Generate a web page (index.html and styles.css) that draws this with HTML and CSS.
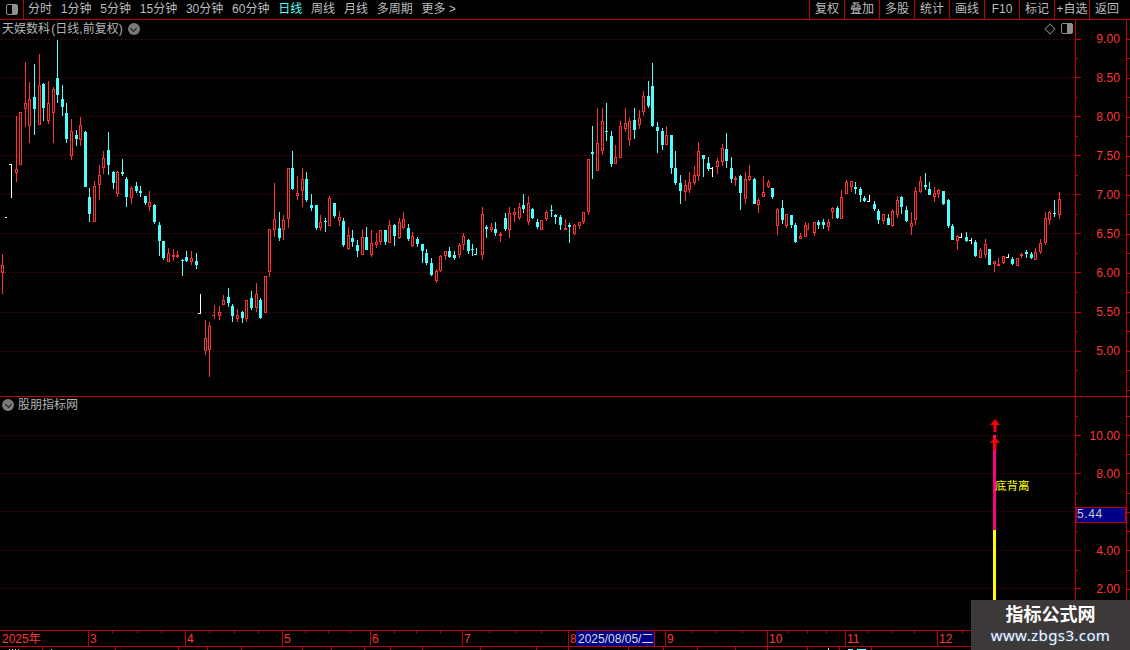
FILE: index.html
```html
<!DOCTYPE html>
<html lang="zh-CN">
<head>
<meta charset="utf-8">
<title>天娱数科 日线</title>
<link rel="stylesheet" href="styles.css">
</head>
<body>
<div class="app">
  <header class="toolbar">
    <div class="layout-cell"><span class="split-icon"><i></i></span></div>
    <nav class="periods">
      <span>分时</span><span>1分钟</span><span>5分钟</span><span>15分钟</span><span>30分钟</span><span>60分钟</span>
      <span class="active">日线</span><span>周线</span><span>月线</span><span>多周期</span><span>更多 &gt;</span>
    </nav>
    <div class="actions">
      <span>复权</span><span>叠加</span><span>多股</span><span>统计</span><span>画线</span><span>F10</span><span>标记</span><span>+自选</span><span>返回</span>
    </div>
  </header>

  <section class="panel panel-main">
    <svg class="chart" viewBox="0 20 1130 376" shape-rendering="crispEdges">
      <path id="main-grid" class="grid"/>
      <g id="candles"></g>
      <path id="main-ticks" class="axis-line"/>
      <g class="axis-label">
        <text x="1120" y="43">9.00</text><text x="1120" y="82">8.50</text><text x="1120" y="121">8.00</text>
        <text x="1120" y="160">7.50</text><text x="1120" y="199">7.00</text><text x="1120" y="238">6.50</text>
        <text x="1120" y="277">6.00</text><text x="1120" y="316">5.50</text><text x="1120" y="355">5.00</text>
      </g>
    </svg>
    <div class="stock-title">天娱数科 (日线,前复权)<span class="round-icon"></span></div>
    <div class="chart-tools"><span class="diamond"></span><span class="split-icon"><i></i></span></div>
  </section>

  <section class="panel panel-sub">
    <svg class="chart" viewBox="0 397 1130 233" shape-rendering="crispEdges">
      <path id="sub-grid" class="grid"/>
      <rect class="bar-pink" x="993" y="435" width="3" height="95"/>
      <rect class="bar-yellow" x="993" y="530" width="3" height="70"/>
      <path class="arrow" shape-rendering="auto" d="M995 419l5 6h-3.500v7h-3v-7h-3.500zM995 437l5 6h-3.500v7h-3v-7h-3.500z"/>
      <text class="signal" x="995" y="490">底背离</text>
      <path id="sub-ticks" class="axis-line"/>
      <g class="axis-label">
        <text x="1120" y="440">10.00</text><text x="1120" y="478">8.00</text>
        <text x="1120" y="555">4.00</text><text x="1120" y="593">2.00</text>
      </g>
      <rect class="value-box" x="1076.500" y="507.500" width="49" height="15"/>
      <text class="value-text" x="1077" y="518">5.44</text>
    </svg>
    <div class="indicator-title"><span class="round-icon"></span>股朋指标网</div>
  </section>

  <section class="panel panel-date">
    <svg class="chart" viewBox="0 631 1130 15" shape-rendering="crispEdges">
      <path class="axis-line" d="M88.500 631V646M185.500 631V646M282.500 631V646M370.500 631V646M462.500 631V646M568.500 631V646M665.500 631V646M767.500 631V646M845.500 631V646M937.500 631V646M112.500 631v2M137.500 631v2M161.500 631v2M209.500 631v2M234.500 631v2M258.500 631v2M305.500 631v2M328.500 631v2M350.500 631v2M394.500 631v2M416.500 631v2M440.500 631v2M489.500 631v2M515.500 631v2M541.500 631v2M691.500 631v2M716.500 631v2M742.500 631v2M787.500 631v2M807.500 631v2M826.500 631v2M868.500 631v2M891.500 631v2M914.500 631v2M962.500 631v2"/>
      <g class="date-label">
        <text x="2" y="643">2025年</text><text x="90" y="643">3</text><text x="187" y="643">4</text>
        <text x="284" y="643">5</text><text x="372" y="643">6</text><text x="464" y="643">7</text>
        <text x="570" y="643">8</text><text x="667" y="643">9</text><text x="769" y="643">10</text>
        <text x="847" y="643">11</text><text x="939" y="643">12</text>
      </g>
      <rect class="cursor-box" x="576" y="631" width="78" height="15"/>
      <path class="axis-line" d="M654.500 631V646"/>
      <text class="cursor-text" x="578" y="643">2025/08/05/二</text>
    </svg>
  </section>

  <section class="panel-strip">
    <svg class="chart" viewBox="0 647 1130 3" shape-rendering="crispEdges">
      <path class="axis-line" d="M42.500 647v3M115.500 647v3M178.500 647v3M207.500 647v3M241.500 647v3M302.500 647v3M331.500 647v3M364.500 647v3M390.500 647v3M422.500 647v3M480.500 647v3M536.500 647v3M568.500 647v3M628.500 647v3M663.500 647v3M697.500 647v3M735.500 647v3M767.500 647v3M807.500 647v3M839.500 647v3M871.500 647v3"/>
      <path class="strip-white" d="M9 649h1v1h-1zM12 649h1v1h-1zM15 649h1v1h-1zM18 649h1v1h-1zM51 649h1v1h-1zM828 648h1v2h-1z"/>
      <path class="strip-cyan" d="M848 649h5v1h-5zM857 649h9v1h-9z"/>
    </svg>
  </section>

  <aside class="watermark">
    <strong>指标公式网</strong>
    <span>www.zbgs3.com</span>
  </aside>
</div>
<script src="chart.js"></script>
</body>
</html>
```
FILE: styles.css
```css
* { box-sizing: border-box; }
html, body { margin: 0; padding: 0; background: #000; }
.app {
  position: relative;
  width: 1130px;
  height: 650px;
  overflow: hidden;
  display: flex;
  flex-direction: column;
  background: #000;
  color: #bdbdbd;
  font: 12px/1 "Liberation Sans", "Noto Sans CJK SC", sans-serif;
}
.toolbar {
  flex: none;
  height: 20px;
  display: flex;
  align-items: stretch;
  border-bottom: 1px solid #c00000;
  line-height: 19px;
}
.layout-cell {
  width: 24px;
  border-right: 1px solid #c00000;
  display: flex;
  align-items: center;
  justify-content: center;
}
.split-icon {
  display: block;
  width: 12px;
  height: 11px;
  border: 1px solid #8f8f8f;
  border-radius: 2px;
  position: relative;
}
.split-icon i {
  position: absolute;
  top: 0;
  right: 0;
  bottom: 0;
  width: 5px;
  background: #8f8f8f;
}
.periods {
  display: flex;
  gap: 8.800px;
  padding-left: 4px;
}
.periods .active { color: #54ffff; }
.actions {
  margin-left: auto;
  margin-right: 6px;
  display: flex;
}
.actions span {
  width: 35px;
  text-align: center;
  border-left: 1px solid #c00000;
  white-space: nowrap;
}
.panel {
  flex: none;
  position: relative;
  border-bottom: 1px solid #c00000;
}
.panel-main { height: 377px; }
.panel-sub { height: 234px; }
.panel-date { border-top: 1px solid #c00000; margin-top: -1px; height: 17px; }
.panel-strip { flex: none; height: 3px; }
.chart { display: block; width: 1130px; height: 100%; }
.grid { fill: #8c0000; stroke: none; }
.axis-line { fill: none; stroke: #c00000; stroke-width: 1; }
.axis-label text {
  fill: #ff3636;
  font-size: 12px;
  text-anchor: end;
  letter-spacing: .1px;
}
.date-label text { fill: #ff3636; font-size: 12px; }
.stock-title {
  position: absolute;
  left: 2px;
  top: 1px;
  height: 16px;
  line-height: 16px;
  display: flex;
  align-items: center;
  color: #b4b4b4;
  word-spacing: -2px;
}
.round-icon {
  display: block;
  width: 12px;
  height: 12px;
  border-radius: 50%;
  background: #7a7a7a;
  position: relative;
  flex: none;
}
.round-icon::after {
  content: "";
  position: absolute;
  left: 3.500px;
  top: 2.500px;
  width: 4px;
  height: 4px;
  border-right: 1.500px solid #1c1c1c;
  border-bottom: 1.500px solid #1c1c1c;
  transform: rotate(45deg);
}
.stock-title .round-icon { margin-left: 5px; }
.chart-tools {
  position: absolute;
  right: 57px;
  top: 3px;
  display: flex;
  align-items: center;
  gap: 7px;
}
.diamond {
  display: block;
  width: 8px;
  height: 8px;
  border: 1px solid #777;
  transform: rotate(45deg);
}
.indicator-title {
  position: absolute;
  left: 2px;
  top: 0;
  height: 16px;
  display: flex;
  align-items: center;
  gap: 4px;
  color: #b4b4b4;
}
.bar-pink { fill: #ff0080; }
.bar-yellow { fill: #ffff00; }
.arrow { fill: #ff0000; }
.signal { fill: #ffff00; font-size: 11.500px; }
.value-box { fill: #000088; stroke: #c00000; }
.value-text { fill: #c8c8c8; font-size: 12px; letter-spacing: .6px; }
.cursor-box { fill: #000088; }
.cursor-text { fill: #dcdcdc; font-size: 12px; }
.strip-white { fill: #dddddd; }
.strip-cyan { fill: #54ffff; }
.watermark {
  position: absolute;
  right: 0;
  bottom: 0;
  width: 159px;
  height: 50px;
  background: #3d3939;
  display: flex;
  flex-direction: column;
  align-items: center;
  padding-top: 5px;
}
.watermark strong {
  font-size: 18px;
  line-height: 21px;
  color: #fff;
  font-weight: 700;
}
.watermark span {
  font-family: "Noto Sans", sans-serif;
  font-size: 15px;
  line-height: 19px;
  letter-spacing: .4px;
  color: #f4f4f4;
  text-shadow: 0 0 2px #3f78c8;
}
```
FILE: chart.js
```js
// kind: 0 red hollow, 1 cyan filled, 3/4/5 red/cyan/white wick with a left tick at y=top
var RED = '#ff3232', CYAN = '#4dffff', WHITE = '#ffffff';
var DATA = [
[2,254,294,265,273,0],[7,217,217,217,217,5],[11,164,198,164,164,5],
[16,116,182,169,173,0],[20,112,165,112,165,0],[25,62,127,103,109,0],[29,82,143,99,126,0],
[34,64,135,97,109,1],[39,54,125,85,125,0],[43,83,121,84,108,1],[48,81,124,103,121,0],
[53,87,143,89,113,0],[57,40,103,78,95,1],[62,85,116,99,107,1],[66,103,143,113,139,1],
[71,119,160,131,156,0],[76,130,146,135,139,1],[80,117,146,125,140,0],[85,131,187,132,187,1],
[89,188,222,197,214,1],[94,181,222,186,222,0],[99,165,200,175,185,0],[103,151,174,158,168,0],
[108,132,175,150,165,1],[113,171,189,172,183,1],[117,171,197,172,194,0],[122,159,176,172,174,1],
[126,177,207,179,197,1],[131,186,204,188,198,0],[136,182,193,186,191,1],[140,186,197,191,193,1],
[145,196,205,196,203,1],[149,191,211,202,207,0],[154,204,224,205,222,1],[159,222,256,225,241,1],
[163,241,260,241,258,1],[168,248,262,253,262,0],[173,249,261,255,257,0],[177,251,258,255,257,0],
[182,259,276,260,261,1],[186,251,262,257,261,1],[191,251,265,258,262,0],[196,253,269,261,265,1],
[200,294,314,313,313,5],[205,320,355,338,351,0],[209,322,377,326,350,0],[214,305,319,315,315,3],
[219,306,320,312,316,0],[223,295,305,300,305,0],[228,288,307,297,303,1],[232,304,322,306,316,1],
[237,309,322,315,319,0],[242,311,323,312,318,1],[246,300,322,300,319,0],[251,291,310,298,308,1],
[256,283,312,294,308,0],[260,298,319,300,318,1],[265,276,313,276,313,0],[269,229,277,229,272,0],
[274,183,237,219,230,0],[279,212,241,228,238,1],[283,215,240,220,230,0],[288,168,228,168,219,0],
[292,151,190,168,189,1],[297,176,200,193,196,0],[302,168,207,179,191,0],[306,172,202,179,200,1],
[311,194,211,205,208,1],[316,205,230,205,228,1],[320,215,231,222,228,0],[325,218,232,221,222,1],
[329,196,226,198,226,0],[334,203,218,203,216,1],[339,211,226,217,221,0],[343,218,247,221,245,1],
[348,227,250,235,249,0],[352,230,247,238,242,1],[357,240,257,245,251,1],[362,229,255,237,255,0],
[366,227,250,237,250,1],[371,230,257,243,255,0],[376,233,248,242,245,0],[380,230,245,230,242,0],
[385,230,245,230,242,1],[389,220,243,225,243,0],[394,224,246,225,236,1],[399,218,239,222,238,0],
[403,212,229,219,228,0],[408,224,241,228,239,1],[412,232,247,236,246,0],[417,237,247,239,244,1],
[422,244,263,244,251,1],[426,249,265,253,263,1],[431,258,276,263,275,1],[436,269,283,271,281,0],
[440,255,272,256,271,0],[445,251,260,251,256,0],[449,247,258,251,257,1],[454,251,260,255,258,1],
[459,243,258,245,255,0],[463,233,250,236,245,0],[468,239,254,240,251,1],[472,244,256,249,250,1],
[476,248,255,254,254,4],[482,207,260,214,255,0],[486,225,238,227,229,1],[491,223,232,227,230,0],
[495,222,236,229,233,1],[500,232,242,234,236,0],[505,213,231,218,229,1],[509,207,238,213,230,0],
[514,208,222,212,215,0],[519,203,220,207,218,0],[523,194,213,205,209,1],[528,196,225,203,222,0],
[532,208,219,209,218,1],[537,219,229,222,227,1],[541,220,230,220,230,0],[546,210,221,212,219,0],
[551,205,217,210,211,1],[555,214,224,215,217,1],[560,215,230,217,225,1],[565,219,230,228,230,0],
[569,223,243,225,227,1],[574,224,235,225,234,0],[579,222,229,222,226,0],[583,212,224,212,222,0],
[588,159,215,159,212,0],[592,126,179,152,154,1],[597,108,171,143,171,0],[602,108,155,121,151,0],
[606,103,141,131,132,1],[611,131,167,136,164,1],[615,145,164,157,164,0],[620,121,158,126,158,0],
[625,108,132,123,129,0],[629,118,146,121,140,0],[634,108,139,120,130,1],[639,110,129,118,125,0],
[643,91,116,96,112,0],[648,81,108,96,106,1],[652,63,127,86,126,1],[657,122,153,127,131,1],
[662,128,150,131,145,1],[666,126,145,135,145,0],[671,135,174,135,168,1],[675,151,185,168,183,1],
[680,175,204,183,191,1],[685,180,201,185,192,0],[689,172,193,182,190,0],[694,166,185,175,183,0],
[698,142,181,151,176,0],[703,155,177,155,159,1],[708,157,171,163,169,1],[712,167,177,168,168,5],
[717,158,174,161,167,0],[722,144,166,148,162,0],[726,133,168,149,161,1],[731,157,183,168,179,1],
[735,176,186,178,180,0],[740,175,210,176,193,1],[745,172,204,179,199,0],[749,165,181,176,180,0],
[754,178,204,179,204,1],[758,198,213,200,205,0],[763,176,197,192,197,0],[768,180,188,182,187,0],
[772,188,199,188,197,1],[777,208,235,209,226,0],[782,200,224,208,220,1],[786,214,228,214,226,0],
[791,215,228,215,225,1],[795,223,243,225,242,1],[800,233,239,236,239,0],[805,222,237,225,237,0],
[808,223,230,229,229,3],[814,222,236,222,233,0],[818,220,229,222,225,1],[823,219,229,222,225,1],
[828,219,231,222,227,0],[832,207,219,208,212,0],[837,206,219,208,218,1],[841,190,219,197,219,0],
[846,180,194,182,194,0],[851,181,192,181,187,0],[855,182,194,187,189,1],[860,187,202,189,195,1],
[864,196,202,198,201,1],[869,195,202,201,201,5],[874,201,211,204,209,1],[878,209,224,211,220,1],
[883,214,224,214,221,0],[888,214,225,218,225,1],[892,209,227,211,226,0],[897,196,218,200,215,0],
[901,196,214,197,207,1],[906,206,222,210,221,1],[911,212,235,223,227,0],[915,187,225,191,220,0],
[920,176,193,181,192,0],[925,173,190,185,187,1],[929,182,195,189,195,1],[934,187,202,193,197,0],
[938,189,198,190,194,0],[943,191,205,191,204,1],[948,199,228,200,226,1],[952,224,240,226,240,1],
[957,235,250,236,241,0],[961,233,238,237,237,5],[966,232,242,237,241,1],[971,238,244,240,240,5],
[975,240,257,242,256,1],[980,248,258,250,258,0],[985,239,258,244,255,0],[989,249,265,249,265,1],
[994,261,272,261,264,0],[998,258,266,264,266,0],[1003,256,264,256,263,0],[1008,254,258,257,257,5],
[1012,257,265,259,264,1],[1017,258,266,258,266,0],[1021,253,258,254,256,0],[1026,250,258,252,254,1],
[1031,252,259,254,258,1],[1035,248,260,252,260,0],[1040,239,254,243,252,0],[1045,212,245,218,243,0],
[1049,211,225,212,220,0],[1054,200,217,213,214,1],[1059,192,219,199,215,0]
];

var NS = 'http://www.w3.org/2000/svg';
var layer = document.getElementById('candles');

function rect(x, y, w, h, fill) {
  var r = document.createElementNS(NS, 'rect');
  r.setAttribute('x', x);
  r.setAttribute('y', y);
  r.setAttribute('width', w);
  r.setAttribute('height', h);
  r.setAttribute('fill', fill);
  layer.appendChild(r);
}

function grid(id, rows) {
  var d = '';
  rows.forEach(function (y) {
    for (var x = 1; x < 1075; x += 4) d += 'M' + x + ' ' + y + 'h1v1h-1z';
  });
  document.getElementById(id).setAttribute('d', d);
}
grid('main-grid', [39, 77, 116, 155, 194, 233, 272, 312, 351]);
grid('sub-grid', [435, 473, 511, 550, 588]);

DATA.forEach(function (d) {
  var x = d[0], hi = d[1], lo = d[2], top = d[3], bot = d[4], kind = d[5];
  if (kind >= 3) {
    var col = kind === 3 ? RED : kind === 4 ? CYAN : WHITE;
    if (lo > hi) rect(x, hi, 1, lo - hi, col);
    rect(x - 2, top, 2, 1, col);
    return;
  }
  var color = kind === 0 ? RED : CYAN;
  rect(x, hi, 1, lo - hi, color);
  rect(x - 1, top, 3, Math.max(bot - top, 1), color);
  if (kind === 0 && bot - top > 2) rect(x, top + 1, 1, bot - top - 2, '#000');
});

function ticks(id, from, to, step, major, minorStart, sideFrom, sideTo, sideStep) {
  var d = 'M1075.5 ' + from + 'V' + to + 'M1126.5 ' + from + 'V' + to;
  major.forEach(function (y) { d += 'M1076 ' + y + 'h5'; });
  for (var m = minorStart; m < to; m += step) d += 'M1076 ' + (Math.floor(m) + 0.5) + 'h2';
  for (var s = sideFrom; s < sideTo; s += sideStep) d += 'M1127 ' + (Math.floor(s) + 0.5) + 'h3';
  document.getElementById(id).setAttribute('d', d);
}
ticks('main-ticks', 20, 396, 39, [39.5, 77.5, 116.5, 155.5, 194.5, 233.5, 272.5, 312.5, 351.5], 58.5, 39, 396, 19.5);
ticks('sub-ticks', 397, 630, 38.5, [435.5, 473.5, 511.5, 550.5, 588.5], 416, 416, 630, 19.25);
```
